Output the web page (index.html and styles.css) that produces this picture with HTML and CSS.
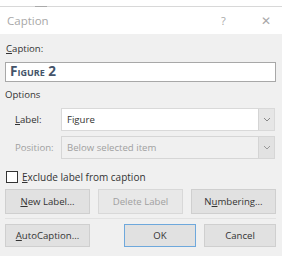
FILE: index.html
```html
<!DOCTYPE html>
<html lang="en">

<head>
    <meta charset="UTF-8">
    <title>Caption</title>
    <link rel="stylesheet" href="styles.css">
</head>

<body>
    <div class="strip"><span class="grip"></span></div>
    <div class="titlebar">
        <span class="title">Caption</span>
        <span class="help">?</span>
        <span class="close">&#x2715;</span>
    </div>

    <div class="dialog">
        <div class="caption-label"><u>C</u>aption:</div>
        <div class="caption-input">Figure 2</div>

        <div class="options">Options</div>

        <div class="row">
            <span class="row-label"><u>L</u>abel:</span>
            <div class="combo">
                <span class="value">Figure</span>
                <span class="arrow"><svg width="8" height="5" viewBox="0 0 8 5"><path d="M1 1l3 3 3-3" fill="none" stroke="#888" stroke-width="1"/></svg></span>
            </div>
        </div>
        <div class="row disabled">
            <span class="row-label">Position:</span>
            <div class="combo">
                <span class="value">Below selected item</span>
                <span class="arrow"><svg width="8" height="5" viewBox="0 0 8 5"><path d="M1 1l3 3 3-3" fill="none" stroke="#999" stroke-width="1"/></svg></span>
            </div>
        </div>

        <label class="check">
            <span class="box"></span>
            <span><u>E</u>xclude label from caption</span>
        </label>

        <div class="buttons">
            <button><u>N</u>ew Label...</button>
            <button class="off">Delete Label</button>
            <button>N<u>u</u>mbering...</button>
        </div>
        <div class="sep"></div>
        <div class="buttons bottom">
            <button><u>A</u>utoCaption...</button>
            <div class="right">
                <button class="default">OK</button>
                <button>Cancel</button>
            </div>
        </div>
    </div>
</body>

</html>
```

FILE: styles.css
```css
/*General*/
* {
    margin: 0;
    padding: 0;
    box-sizing: border-box;
}

body {
    font-family: 'Open Sans', 'Noto Sans', sans-serif;
    font-size: 9.6px;
    color: #333;
    background-color: #f0f0f0;
    width: 282px;
    height: 256px;
    overflow: hidden;
}

u {
    text-decoration: underline;
    text-underline-offset: 1px;
}

/*Top*/
.strip {
    height: 7px;
    background-color: #fff;
    border-bottom: 1px solid #d8d8d8;
    position: relative;
}

.grip {
    position: absolute;
    left: 35px;
    bottom: -1px;
    width: 12px;
    height: 1px;
    background-color: #aaa;
}

.titlebar {
    height: 27px;
    background-color: #fff;
    display: flex;
    align-items: center;
    padding: 0 0 0 7px;
    color: #a8a8a8;
}

.title {
    font-size: 11.5px;
    flex: 1;
}

.help {
    font-size: 11px;
    width: 40px;
}

.close {
    font-size: 12px;
    font-weight: 300;
    width: 21px;
}

/*Dialog*/
.dialog {
    padding: 8px 6px 0 5px;
}

.caption-label {
    padding-left: 1px;
    height: 20px;
    line-height: 14px;
}

.caption-input {
    height: 20px;
    background-color: #fff;
    border: 1px solid #a8a8a8;
    font-variant: small-caps;
    font-weight: 700;
    font-size: 13.5px;
    color: #44546a;
    line-height: 17px;
    padding-left: 4px;
}

.options {
    margin-top: 6px;
    height: 19px;
    line-height: 14px;
}

/*Rows*/
.row {
    display: flex;
    align-items: center;
    margin-top: 1px;
    margin-bottom: 5px;
}

.row + .row {
    margin-top: 0;
}

.row-label {
    width: 56px;
    padding-left: 10px;
}

.combo {
    flex: 1;
    height: 23px;
    margin-right: 1px;
    background-color: #fff;
    border: 1px solid #d9d9d9;
    display: flex;
    align-items: center;
}

.combo .value {
    flex: 1;
    padding-left: 5px;
}

.combo .arrow {
    width: 16px;
    height: 21px;
    background-color: #e6e6e6;
    border-left: 1px solid #d4d4d4;
    display: flex;
    align-items: center;
    justify-content: center;
}

.disabled {
    color: #a0a0a0;
}

.disabled .combo {
    background-color: #f0f0f0;
    border-color: #d6d6d6;
}

.disabled .arrow {
    background-color: #e2e2e2;
}

/*Checkbox*/
.check {
    display: flex;
    align-items: center;
    margin-top: 11px;
    height: 13px;
    font-size: 10px;
}

.check .box {
    width: 12px;
    height: 12px;
    border: 1px solid #333;
    background-color: #fff;
    margin: 0 4px 0 1px;
}

/*Buttons*/
.buttons {
    display: flex;
    justify-content: space-between;
    margin-top: 6px;
}

.buttons button {
    font-family: inherit;
    font-size: 9.6px;
    color: #333;
    width: 85px;
    height: 25px;
    background-color: #e1e1e1;
    border: 1px solid #cfcfcf;
}

.buttons button.off {
    color: #a0a0a0;
    background-color: #e8e8e8;
    border-color: #d8d8d8;
}

.sep {
    height: 1px;
    background-color: #e2e2e2;
    margin-top: 4px;
}

.buttons.bottom {
    margin-top: 5px;
}

.buttons.bottom button {
    height: 23px;
}

.buttons .right {
    display: flex;
    gap: 8px;
}

.buttons .right button {
    width: 72px;
}

.buttons button.default {
    border: 1px solid #6ea8dc;
}
```
